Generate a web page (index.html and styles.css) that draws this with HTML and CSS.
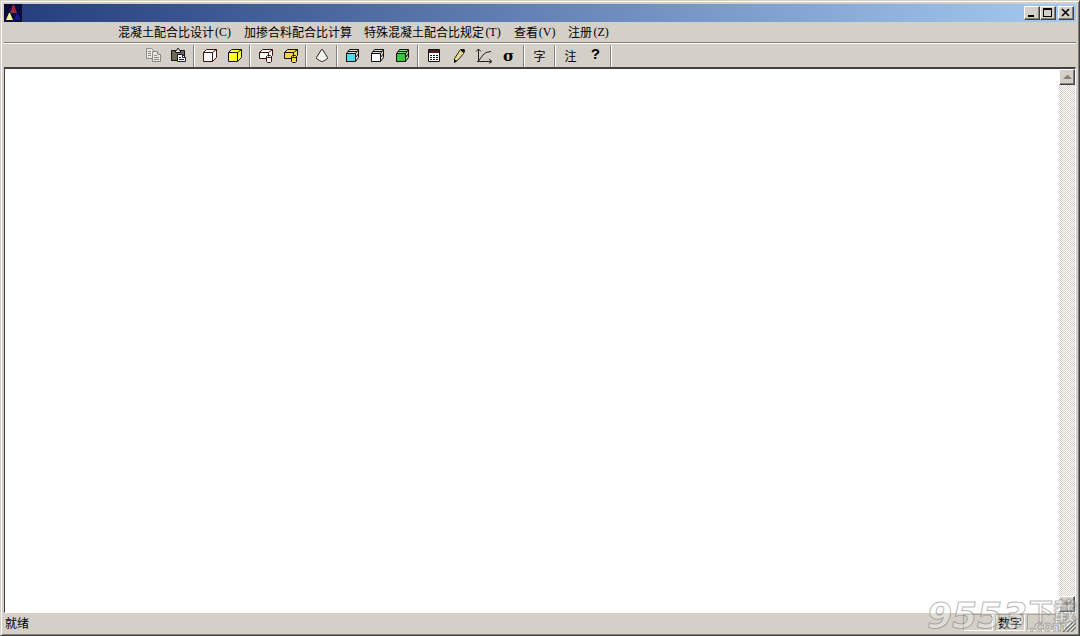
FILE: index.html
```html
<!DOCTYPE html>
<html lang="zh-CN">
<head>
<meta charset="utf-8">
<title>混凝土配合比设计</title>
<link rel="stylesheet" href="styles.css">
</head>
<body>
<div class="window">
  <header class="titlebar">
    <svg class="app-icon" width="18" height="18" viewBox="0 0 18 18" aria-hidden="true">
      <path fill="#0c0c3c" d="M0 0h18v18H0z"/>
      <path fill="#a02838" d="M9 1h1l3 8H6z"/>
      <path fill="#f4f4a0" d="M5 9h1l3 7H2z"/>
      <path fill="#1818a8" d="M13 9l4 7h-7z"/>
    </svg>
    <div class="caption-buttons">
      <button class="caption" type="button" aria-label="最小化"><svg width="14" height="12" viewBox="0 0 14 12"><path d="M3 8h6v2H3z"/></svg></button>
      <button class="caption" type="button" aria-label="最大化"><svg width="14" height="12" viewBox="0 0 14 12"><path fill-rule="evenodd" d="M2 1h9v9H2zM3 3v6h7V3z"/></svg></button>
      <button class="caption caption-close" type="button" aria-label="关闭"><svg width="14" height="12" viewBox="0 0 14 12"><path fill="none" stroke="#000" stroke-width="1.6" d="M3 2l7 7M10 2L3 9"/></svg></button>
    </div>
  </header>
  <nav class="menubar">
    <button class="menu" type="button">混凝土配合比设计<span class="key">(C)</span></button>
    <button class="menu" type="button">加掺合料配合比计算</button>
    <button class="menu" type="button">特殊混凝土配合比规定<span class="key">(T)</span></button>
    <button class="menu" type="button">查看<span class="key">(V)</span></button>
    <button class="menu" type="button">注册<span class="key">(Z)</span></button>
  </nav>
  <div class="toolbar" role="toolbar">
    <button class="tool" type="button" aria-label="复制"><svg width="16" height="16" viewBox="0 0 16 16"><g fill="#e8e6e0" stroke="#8c8a86"><path d="M.5.5h5l3 3v7h-8z"/><path d="M2 3.500h3M2 5.500h3M2 7.500h3"/><path d="M6.500 3.500h5l3 3v7h-8z"/><path d="M11.500 3.500v3h3M8 7.500h3M8 9.500h5M8 11.500h5"/></g></svg></button>
    <button class="tool" type="button" aria-label="粘贴"><svg width="16" height="16" viewBox="0 0 16 16"><path fill="#6c6a50" stroke="#111" d="M.5 2.500h13v10H.5z"/><path fill="#eee" stroke="#111" d="M4.500 4.500v-2h1l1-2h1l1 2h1v2z"/><path fill="#fff" stroke="#181850" d="M6.500 6.500h5l3 3v4h-8z"/><path fill="none" stroke="#181850" d="M11.500 6.500v3h3M8 9.500h2M8 11.500h5"/></svg></button>
    <span class="divider"></span>
    <button class="tool" type="button" aria-label="配合比设计"><svg class="cube red" width="16" height="16" viewBox="0 0 16 16"><path d="M1.500 4.500l3-3h10v8l-4 4h-9zM1.500 4.500h9v9M10.500 4.500l4-3"/></svg></button>
    <button class="tool" type="button" aria-label="配合比计算"><svg class="cube yellow" width="16" height="16" viewBox="0 0 16 16"><path d="M1.500 4.500l3-3h10v8l-4 4h-9zM1.500 4.500h9v9M10.500 4.500l4-3"/></svg></button>
    <span class="divider"></span>
    <button class="tool" type="button" aria-label="掺合料设计"><svg class="cube red" width="16" height="16" viewBox="0 0 16 16"><path d="M1.500 4.500l3-3h10v6l-3 3h-10zM1.500 4.500h9v6M10.500 4.500l4-3"/><path d="M8.500 8.500l1-1h3l1 1v5l-1 1h-3l-1-1zM8.500 8.500l1 1h3l1-1"/></svg></button>
    <button class="tool" type="button" aria-label="掺合料计算"><svg class="cube gold" width="16" height="16" viewBox="0 0 16 16"><path d="M1.500 4.500l3-3h10v6l-3 3h-10zM1.500 4.500h9v6M10.500 4.500l4-3"/><path d="M8.500 8.500l1-1h3l1 1v5l-1 1h-3l-1-1zM8.500 8.500l1 1h3l1-1"/></svg></button>
    <span class="divider"></span>
    <button class="tool" type="button" aria-label="坍落度"><svg width="16" height="16" viewBox="0 0 16 16"><path fill="#f4f4f0" stroke="#222" d="M7.500 1.500h1l5 8v1l-3 2-2 1h-1l-2-1-3-2v-1z"/></svg></button>
    <span class="divider"></span>
    <button class="tool" type="button" aria-label="立方体一"><svg class="cube cyan" width="16" height="16" viewBox="0 0 16 16"><path class="lid" d="M1.500 5.500l3-4h9v8l-3 4h-9z"/><path d="M1.500 5.500h9v8h-9z"/><path class="line" d="M10.500 5.500l3-4M3 3.500h9M10.500 9.500l3-4"/></svg></button>
    <button class="tool" type="button" aria-label="立方体二"><svg class="cube white" width="16" height="16" viewBox="0 0 16 16"><path class="lid" d="M1.500 5.500l3-4h9v8l-3 4h-9z"/><path d="M1.500 5.500h9v8h-9z"/><path class="line" d="M10.500 5.500l3-4M3 3.500h9M10.500 9.500l3-4"/></svg></button>
    <button class="tool" type="button" aria-label="立方体三"><svg class="cube green" width="16" height="16" viewBox="0 0 16 16"><path class="lid" d="M1.500 5.500l3-4h9v8l-3 4h-9z"/><path d="M1.500 5.500h9v8h-9z"/><path class="line" d="M10.500 5.500l3-4M3 3.500h9M10.500 9.500l3-4"/></svg></button>
    <span class="divider"></span>
    <button class="tool" type="button" aria-label="计算器"><svg width="16" height="16" viewBox="0 0 16 16"><path fill="#fff" stroke="#111" d="M2.500 1.500h11v12h-11z"/><path fill="#501820" d="M3 2h10v3H3z"/><path stroke="#111" stroke-dasharray="2 1" d="M4 7.500h8M4 9.500h8M4 11.500h8"/></svg></button>
    <button class="tool" type="button" aria-label="铅笔"><svg width="16" height="16" viewBox="0 0 16 16"><path fill="#e8d890" stroke="#222" d="M3.500 14.500v-4l6-9h2l2 1-1 3-5 6z"/><path fill="#111" d="M3 15v-4l3 2zM10 1h3l1 1-1 3-3-2z"/></svg></button>
    <button class="tool" type="button" aria-label="曲线"><svg class="chart" width="18" height="16" viewBox="0 0 18 16"><path d="M3.500 14V1M1 3.500L3.500 1 6 3.500M2 13.500h14M14 11l3 2.500-3 2M3.500 13L8 7l3-2.500 5-1"/></svg></button>
    <button class="tool sigma" type="button">σ</button>
    <span class="divider"></span>
    <button class="tool" type="button">字</button>
    <span class="divider"></span>
    <button class="tool" type="button">注</button>
    <button class="tool help" type="button">?</button>
    <span class="divider"></span>
  </div>
  <main class="view">
    <div class="page"></div>
    <div class="scrollbar">
      <button class="scroll-button" type="button" aria-label="向上滚动"><svg width="9" height="5" viewBox="0 0 9 5"><path fill="#84827c" d="M4 0h1l4 4H0z"/></svg></button>
      <button class="scroll-button" type="button" aria-label="向下滚动"><svg width="9" height="5" viewBox="0 0 9 5"><path fill="#84827c" d="M0 0h9L5 4H4z"/></svg></button>
    </div>
  </main>
  <footer class="statusbar">
    <span class="message">就绪</span>
    <span class="pane"></span>
    <span class="pane">数字</span>
    <span class="pane"></span>
    <svg class="grip" width="14" height="14" viewBox="0 0 14 14" aria-hidden="true"><path stroke="#fff" d="M0 13L13 0M4 13l9-9M8 13l5-5"/><path stroke="#777" stroke-width="1.500" d="M1 14L14 1M5 14l9-9M9 14l5-5"/></svg>
  </footer>
  <div class="watermark"><span class="digits">9553</span><span class="name">下载</span><span class="domain">.com</span></div>
</div>
</body>
</html>
```
FILE: styles.css
```css
* { box-sizing: border-box; }

body {
  margin: 0;
  font: 12px/16px "Noto Sans CJK SC", sans-serif;
  color: #000;
}

button {
  padding: 0;
  border: 0;
  background: none;
  color: inherit;
  font: inherit;
}

svg { display: block; }

.window {
  position: relative;
  display: flex;
  flex-direction: column;
  min-height: 100vh;
  padding: 3px;
  background: #d4d0c8;
  border: 1px solid #d4d0c8;
  border-right-color: #404040;
  border-bottom-color: #404040;
  box-shadow: inset 1px 1px #fff, inset -1px -1px #808080;
}

.titlebar {
  display: flex;
  align-items: center;
  justify-content: space-between;
  height: 18px;
  padding-right: 2px;
  background: linear-gradient(to right, #243c7c, #a6caf0);
}

.caption-buttons { display: flex; }

.caption {
  width: 16px;
  height: 14px;
  background: #d4d0c8;
  border: 1px solid #fff;
  border-right-color: #404040;
  border-bottom-color: #404040;
  box-shadow: inset -1px -1px #808080;
}

.caption-close { margin-left: 2px; }

.menubar {
  display: flex;
  gap: 12px;
  height: 21px;
  padding-left: 114px;
  border-bottom: 1px solid #808080;
}

.menu {
  display: flex;
  align-items: center;
  white-space: nowrap;
}

.key {
  width: 18px;
  text-align: center;
  font: 12px/16px "Liberation Serif", serif;
}

.toolbar {
  display: flex;
  align-items: center;
  height: 24px;
  padding-left: 137px;
  border-top: 1px solid #fff;
}

.tool {
  display: flex;
  align-items: center;
  justify-content: center;
  width: 25px;
  height: 22px;
}

.divider {
  width: 2px;
  height: 22px;
  margin: 0 2px;
  border-left: 1px solid #808080;
  border-right: 1px solid #fff;
}

.cube path { fill: #fff; stroke: #111; }
.cube.red path { stroke: #401010; }
.cube.yellow path { fill: #ffff38; }
.cube.gold path { fill: #f4d848; }
.cube.green path { fill: #38c838; }
.cube.cyan path { fill: #50dce8; }
.cube .lid.lid { fill: #dedcd4; }
.cube.green .lid.lid { fill: #8cd88c; }
.cube .line.line { fill: none; }

.chart path { fill: none; stroke: #222; }

.sigma { font: bold 15px/16px "DejaVu Serif", serif; }
.help { font: bold 15px/16px "Liberation Mono", monospace; }

.view {
  display: flex;
  flex: 1;
  border: 1px solid #404040;
  border-top-width: 2px;
  border-right-color: #fff;
  border-bottom-color: #fff;
}

.page { flex: 1; background: #fff; }

.scrollbar {
  display: flex;
  flex-direction: column;
  justify-content: space-between;
  width: 16px;
  background: repeating-conic-gradient(#fff 0 25%, #d4d0c8 0 50%) 0 0 / 2px 2px;
}

.scroll-button {
  display: flex;
  align-items: center;
  justify-content: center;
  width: 16px;
  height: 16px;
  background: #d4d0c8;
  border: 1px solid #fff;
  border-right-color: #404040;
  border-bottom-color: #404040;
  box-shadow: inset -1px -1px #808080;
}

.statusbar {
  display: flex;
  align-items: center;
  gap: 2px;
  height: 19px;
  padding-left: 1px;
}

.message { flex: 1; }

.pane {
  width: 30px;
  height: 17px;
  text-align: center;
  border: 1px solid #a8a49c;
  border-right-color: #fff;
  border-bottom-color: #fff;
}

.grip { margin-left: 3px; align-self: flex-end; }

.watermark {
  position: absolute;
  right: 2px;
  bottom: 3px;
  display: grid;
  grid-template-columns: 102px 48px;
  grid-template-rows: 20px 12px;
  color: rgb(255 255 255 / 30%);
  -webkit-text-stroke: 1px rgb(130 130 130 / 60%);
  pointer-events: none;
}

.digits {
  grid-row: 1 / 3;
  font: italic bold 36px/32px "DejaVu Sans", sans-serif;
}

.name { font: bold 24px/20px "Noto Sans CJK SC", sans-serif; }
.domain { font: bold 14px/12px "DejaVu Sans", sans-serif; }
```
